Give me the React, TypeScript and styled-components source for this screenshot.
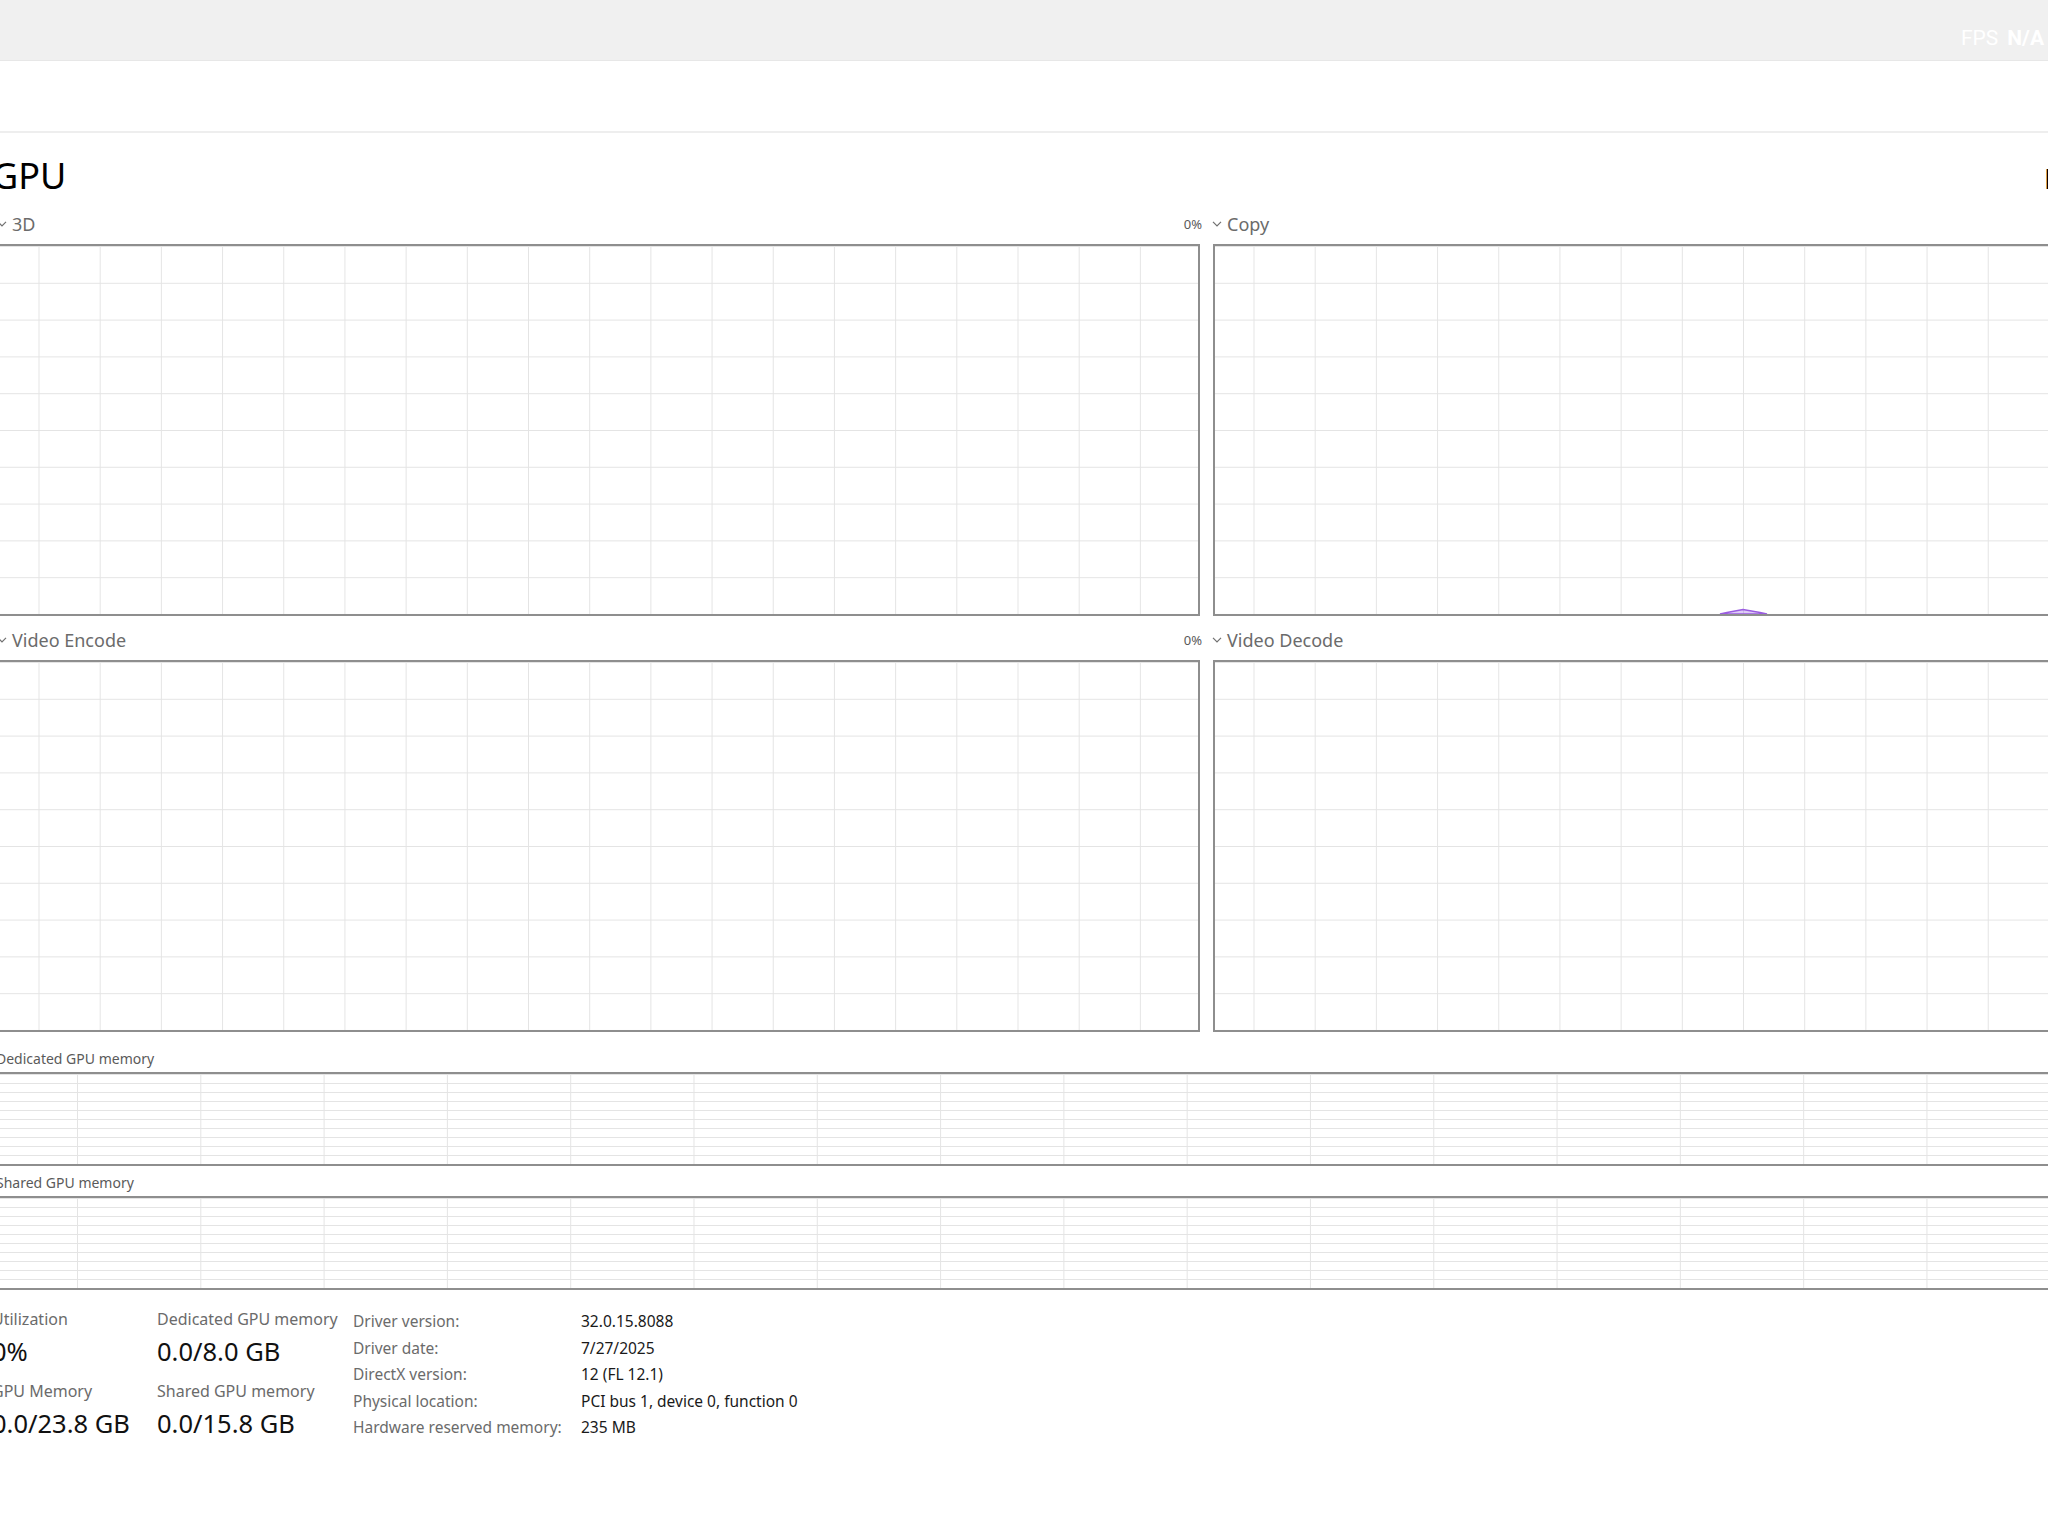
import React from "react";
import styled, { createGlobalStyle } from "styled-components";

const GlobalStyle = createGlobalStyle`
  html, body {
    margin: 0;
    padding: 0;
    background: #ffffff;
  }
  body {
    width: 2048px;
    height: 1536px;
    overflow: hidden;
    font-family: "Noto Sans", "Open Sans", sans-serif;
    color: #1a1a1a;
  }
`;

const Shell = styled.div`
  width: 2048px;
  height: 1536px;
  overflow: hidden;
  display: flex;
  flex-direction: column;
  background: #ffffff;
`;

const TitleBar = styled.header`
  position: relative;
  flex: none;
  height: 60px;
  background: #f0f0f0;
  border-bottom: 1px solid #e7e7e7;
`;

const FpsOverlay = styled.div`
  position: absolute;
  top: 0;
  right: 4px;
  height: 60px;
  padding-top: 16px;
  box-sizing: border-box;
  display: flex;
  align-items: center;
  gap: 9px;
  font-family: Roboto, "Liberation Sans", sans-serif;
  font-size: 21px;
  color: #ffffff;
`;

const FpsValue = styled.span`
  font-weight: 700;
`;

const CommandBar = styled.div`
  flex: none;
  height: 70px;
  border-bottom: 2px solid #eeeeee;
`;

const Main = styled.main`
  margin-left: -8px;
  width: 2440px;
  display: flex;
  flex-direction: column;
`;

const TitleRow = styled.div`
  display: grid;
  grid-template-columns: 2052px 1fr;
  align-items: baseline;
  padding-top: 19px;
`;

const PageTitle = styled.h1`
  margin: 0 0 0 0;
  font-size: 36px;
  line-height: 48px;
  font-weight: 400;
  color: #000000;
`;

const DeviceName = styled.div`
  font-size: 27px;
  line-height: 36px;
  color: #000000;
  white-space: nowrap;
`;

const EngineGrid = styled.section`
  margin-top: 12px;
  padding-left: 6px;
  display: grid;
  grid-template-columns: 1202px 1202px;
  column-gap: 13px;
  row-gap: 12px;
`;

const EngineCell = styled.div`
  display: flex;
  flex-direction: column;
`;

const EngineHeader = styled.div`
  height: 32px;
  padding-bottom: 8px;
  box-sizing: border-box;
  display: flex;
  align-items: center;
  justify-content: space-between;
`;

const EngineName = styled.div`
  display: flex;
  align-items: center;
  gap: 5px;
  margin-left: -1px;
  font-size: 18px;
  line-height: 24px;
  color: #6b6b6b;
`;

const EngineScale = styled.span`
  font-size: 13px;
  color: #595959;
  margin-right: -2px;
`;

const Plot = styled.div<{ $height: number; $colWidth: number; $colOffset: number }>`
  position: relative;
  box-sizing: border-box;
  height: ${(p) => p.$height}px;
  border: 2px solid #8e8e8e;
  background-color: #ffffff;
  background-image:
    linear-gradient(to right, #e4e4e4 1px, transparent 1px),
    linear-gradient(to bottom, #e4e4e4 1px, transparent 1px);
  background-size: ${(p) => p.$colWidth}px 100%, 100% 10%;
  background-position: ${(p) => p.$colOffset}px 0, 0 0;
  overflow: hidden;
`;

const PlotLayer = styled.svg`
  position: absolute;
  inset: 0;
  width: 100%;
  height: 100%;
`;

const MemorySection = styled.section`
  margin-top: 16px;
  padding-left: 4px;
  display: flex;
  flex-direction: column;
  gap: 6px;
`;

const MemoryBlock = styled.div`
  display: flex;
  flex-direction: column;
`;

const MemoryHeader = styled.div`
  height: 24px;
  padding-bottom: 4px;
  box-sizing: border-box;
  display: flex;
  align-items: center;
  font-size: 14px;
  color: #5a5a5a;
`;

const StatsRow = styled.section`
  margin-top: 18px;
  display: flex;
  align-items: flex-start;
`;

const StatColumn = styled.div<{ $width: number }>`
  width: ${(p) => p.$width}px;
  flex: none;
  display: flex;
  flex-direction: column;
`;

const StatLabel = styled.div<{ $spaced?: boolean }>`
  font-size: 16px;
  line-height: 22px;
  color: #6b6b6b;
  margin-top: ${(p) => (p.$spaced ? 10 : 0)}px;
  white-space: nowrap;
`;

const StatValue = styled.div`
  margin-top: 2px;
  font-size: 25.5px;
  line-height: 38px;
  color: #111111;
  white-space: nowrap;
`;

const InfoTable = styled.dl`
  margin: 0;
  display: grid;
  grid-template-columns: 228px auto;
  font-size: 15.5px;
  line-height: 26.5px;
  white-space: nowrap;
`;

const InfoKey = styled.dt`
  margin: 0;
  color: #6b6b6b;
`;

const InfoVal = styled.dd`
  margin: 0;
  color: #1a1a1a;
`;

const Chevron = () => (
  <svg width="10" height="6" viewBox="0 0 10 6" aria-hidden="true">
    <polyline points="1,0.8 5,4.8 9,0.8" fill="none" stroke="#707070" strokeWidth="1.2" />
  </svg>
);

type Engine = { name: string; scale?: string; trace?: string };

const engines: Engine[] = [
  { name: "3D", scale: "0%" },
  { name: "Copy", trace: "M505,368 L512,366.5 L528,363.5 L545,366.5 L552,368 Z" },
  { name: "Video Encode", scale: "0%" },
  { name: "Video Decode" },
];

const info: [string, string][] = [
  ["Driver version:", "32.0.15.8088"],
  ["Driver date:", "7/27/2025"],
  ["DirectX version:", "12 (FL 12.1)"],
  ["Physical location:", "PCI bus 1, device 0, function 0"],
  ["Hardware reserved memory:", "235 MB"],
];

export default function App() {
  return (
    <>
      <GlobalStyle />
      <Shell>
        <TitleBar>
          <FpsOverlay>
            <span>FPS</span>
            <FpsValue>N/A</FpsValue>
          </FpsOverlay>
        </TitleBar>
        <CommandBar />
        <Main>
          <TitleRow>
            <PageTitle>GPU</PageTitle>
            <DeviceName>NVIDIA GeForce RTX 4060</DeviceName>
          </TitleRow>

          <EngineGrid>
            {engines.map((e) => (
              <EngineCell key={e.name}>
                <EngineHeader>
                  <EngineName>
                    <Chevron />
                    <span>{e.name}</span>
                  </EngineName>
                  {e.scale && <EngineScale>{e.scale}</EngineScale>}
                </EngineHeader>
                <Plot $height={372} $colWidth={61.2} $colOffset={38.5}>
                  {e.trace && (
                    <PlotLayer viewBox="0 0 1198 368" preserveAspectRatio="none">
                      <path d={e.trace} fill="rgba(160,110,230,0.35)" stroke="#9a5ce0" strokeWidth="1.6" />
                    </PlotLayer>
                  )}
                </Plot>
              </EngineCell>
            ))}
          </EngineGrid>

          <MemorySection>
            <MemoryBlock>
              <MemoryHeader>Dedicated GPU memory</MemoryHeader>
              <Plot $height={94} $colWidth={123.3} $colOffset={79} />
            </MemoryBlock>
            <MemoryBlock>
              <MemoryHeader>Shared GPU memory</MemoryHeader>
              <Plot $height={94} $colWidth={123.3} $colOffset={79} />
            </MemoryBlock>
          </MemorySection>

          <StatsRow>
            <StatColumn $width={165}>
              <StatLabel>Utilization</StatLabel>
              <StatValue>0%</StatValue>
              <StatLabel $spaced>GPU Memory</StatLabel>
              <StatValue>0.0/23.8 GB</StatValue>
            </StatColumn>
            <StatColumn $width={196}>
              <StatLabel>Dedicated GPU memory</StatLabel>
              <StatValue>0.0/8.0 GB</StatValue>
              <StatLabel $spaced>Shared GPU memory</StatLabel>
              <StatValue>0.0/15.8 GB</StatValue>
            </StatColumn>
            <InfoTable>
              {info.map(([k, v]) => (
                <React.Fragment key={k}>
                  <InfoKey>{k}</InfoKey>
                  <InfoVal>{v}</InfoVal>
                </React.Fragment>
              ))}
            </InfoTable>
          </StatsRow>
        </Main>
      </Shell>
    </>
  );
}
